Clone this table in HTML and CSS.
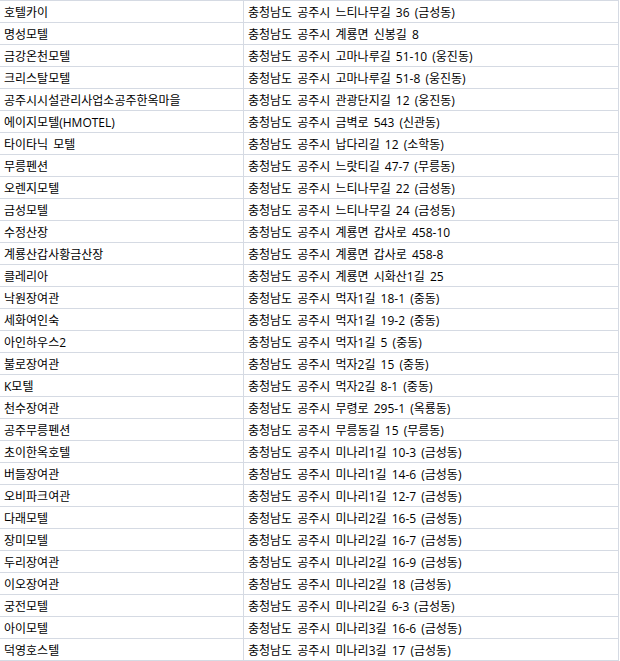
FILE: index.html
```html
<!DOCTYPE html>
<html lang="ko">
<head>
<meta charset="utf-8">
<link rel="stylesheet" href="styles.css">
</head>
<body>
<div class="table">
  <div class="row"><div class="cell">호텔카이</div><div class="cell">충청남도 공주시 느티나무길 36 (금성동)</div></div>
  <div class="row"><div class="cell">명성모텔</div><div class="cell">충청남도 공주시 계룡면 신봉길 8</div></div>
  <div class="row"><div class="cell">금강온천모텔</div><div class="cell">충청남도 공주시 고마나루길 51-10 (웅진동)</div></div>
  <div class="row"><div class="cell">크리스탈모텔</div><div class="cell">충청남도 공주시 고마나루길 51-8 (웅진동)</div></div>
  <div class="row"><div class="cell">공주시시설관리사업소공주한옥마을</div><div class="cell">충청남도 공주시 관광단지길 12 (웅진동)</div></div>
  <div class="row"><div class="cell">에이지모텔(HMOTEL)</div><div class="cell">충청남도 공주시 금벽로 543 (신관동)</div></div>
  <div class="row"><div class="cell">타이타닉 모텔</div><div class="cell">충청남도 공주시 납다리길 12 (소학동)</div></div>
  <div class="row"><div class="cell">무릉펜션</div><div class="cell">충청남도 공주시 느랏티길 47-7 (무릉동)</div></div>
  <div class="row"><div class="cell">오렌지모텔</div><div class="cell">충청남도 공주시 느티나무길 22 (금성동)</div></div>
  <div class="row"><div class="cell">금성모텔</div><div class="cell">충청남도 공주시 느티나무길 24 (금성동)</div></div>
  <div class="row"><div class="cell">수정산장</div><div class="cell">충청남도 공주시 계룡면 갑사로 458-10</div></div>
  <div class="row"><div class="cell">계룡산갑사황금산장</div><div class="cell">충청남도 공주시 계룡면 갑사로 458-8</div></div>
  <div class="row"><div class="cell">클레리아</div><div class="cell">충청남도 공주시 계룡면 시화산1길 25</div></div>
  <div class="row"><div class="cell">낙원장여관</div><div class="cell">충청남도 공주시 먹자1길 18-1 (중동)</div></div>
  <div class="row"><div class="cell">세화여인숙</div><div class="cell">충청남도 공주시 먹자1길 19-2 (중동)</div></div>
  <div class="row"><div class="cell">아인하우스2</div><div class="cell">충청남도 공주시 먹자1길 5 (중동)</div></div>
  <div class="row"><div class="cell">불로장여관</div><div class="cell">충청남도 공주시 먹자2길 15 (중동)</div></div>
  <div class="row"><div class="cell">K모텔</div><div class="cell">충청남도 공주시 먹자2길 8-1 (중동)</div></div>
  <div class="row"><div class="cell">천수장여관</div><div class="cell">충청남도 공주시 무령로 295-1 (옥룡동)</div></div>
  <div class="row"><div class="cell">공주무릉펜션</div><div class="cell">충청남도 공주시 무릉동길 15 (무릉동)</div></div>
  <div class="row"><div class="cell">초이한옥호텔</div><div class="cell">충청남도 공주시 미나리1길 10-3 (금성동)</div></div>
  <div class="row"><div class="cell">버들장여관</div><div class="cell">충청남도 공주시 미나리1길 14-6 (금성동)</div></div>
  <div class="row"><div class="cell">오비파크여관</div><div class="cell">충청남도 공주시 미나리1길 12-7 (금성동)</div></div>
  <div class="row"><div class="cell">다래모텔</div><div class="cell">충청남도 공주시 미나리2길 16-5 (금성동)</div></div>
  <div class="row"><div class="cell">장미모텔</div><div class="cell">충청남도 공주시 미나리2길 16-7 (금성동)</div></div>
  <div class="row"><div class="cell">두리장여관</div><div class="cell">충청남도 공주시 미나리2길 16-9 (금성동)</div></div>
  <div class="row"><div class="cell">이오장여관</div><div class="cell">충청남도 공주시 미나리2길 18 (금성동)</div></div>
  <div class="row"><div class="cell">궁전모텔</div><div class="cell">충청남도 공주시 미나리2길 6-3 (금성동)</div></div>
  <div class="row"><div class="cell">아이모텔</div><div class="cell">충청남도 공주시 미나리3길 16-6 (금성동)</div></div>
  <div class="row"><div class="cell">덕영호스텔</div><div class="cell">충청남도 공주시 미나리3길 17 (금성동)</div></div>
</div>
</body>
</html>
```

FILE: styles.css
```css
html, body {
  margin: 0;
  padding: 0;
  background: #ffffff;
}
body {
  font-family: "Open Sans", "Noto Sans CJK KR", sans-serif;
  font-size: 12px;
  word-spacing: 2px;
  color: #000000;
}
.table {
  width: 619px;
  border-top: 1px solid #d5dae3;
}
.row {
  display: grid;
  grid-template-columns: 244px 375px;
  height: 22px;
  box-sizing: border-box;
  border-bottom: 1px solid #d5dae3;
}
.cell {
  display: flex;
  align-items: center;
  padding-left: 4px;
  border-right: 1px solid #d5dae3;
  white-space: nowrap;
  overflow: hidden;
}
```
